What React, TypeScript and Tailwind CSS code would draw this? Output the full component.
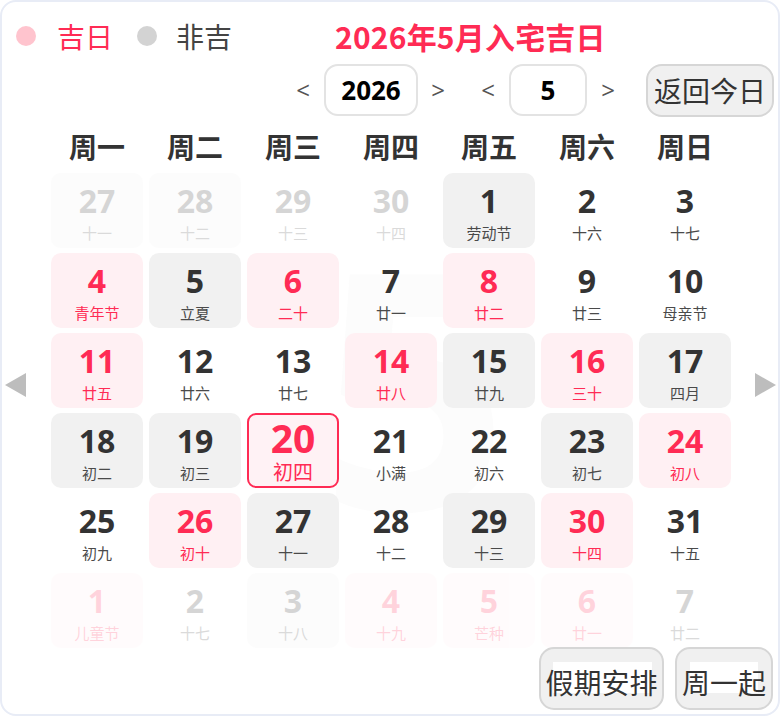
import React from "react"

type Kind = "pink" | "gray" | "plain"

type Day = {
  d: number
  l: string
  k: Kind
  faded?: boolean
  today?: boolean
}

const FONT = { fontFamily: '"Open Sans", "Noto Sans CJK SC", sans-serif' }
const CJK = { fontFamily: '"Noto Sans CJK SC", "Noto Sans", sans-serif' }

const weekdays = ["周一", "周二", "周三", "周四", "周五", "周六", "周日"]

const days: Day[] = [
  { d: 27, l: "十一", k: "gray", faded: true },
  { d: 28, l: "十二", k: "gray", faded: true },
  { d: 29, l: "十三", k: "plain", faded: true },
  { d: 30, l: "十四", k: "plain", faded: true },
  { d: 1, l: "劳动节", k: "gray" },
  { d: 2, l: "十六", k: "plain" },
  { d: 3, l: "十七", k: "plain" },

  { d: 4, l: "青年节", k: "pink" },
  { d: 5, l: "立夏", k: "gray" },
  { d: 6, l: "二十", k: "pink" },
  { d: 7, l: "廿一", k: "plain" },
  { d: 8, l: "廿二", k: "pink" },
  { d: 9, l: "廿三", k: "plain" },
  { d: 10, l: "母亲节", k: "plain" },

  { d: 11, l: "廿五", k: "pink" },
  { d: 12, l: "廿六", k: "plain" },
  { d: 13, l: "廿七", k: "plain" },
  { d: 14, l: "廿八", k: "pink" },
  { d: 15, l: "廿九", k: "gray" },
  { d: 16, l: "三十", k: "pink" },
  { d: 17, l: "四月", k: "gray" },

  { d: 18, l: "初二", k: "gray" },
  { d: 19, l: "初三", k: "gray" },
  { d: 20, l: "初四", k: "pink", today: true },
  { d: 21, l: "小满", k: "plain" },
  { d: 22, l: "初六", k: "plain" },
  { d: 23, l: "初七", k: "gray" },
  { d: 24, l: "初八", k: "pink" },

  { d: 25, l: "初九", k: "plain" },
  { d: 26, l: "初十", k: "pink" },
  { d: 27, l: "十一", k: "gray" },
  { d: 28, l: "十二", k: "plain" },
  { d: 29, l: "十三", k: "gray" },
  { d: 30, l: "十四", k: "pink" },
  { d: 31, l: "十五", k: "plain" },

  { d: 1, l: "儿童节", k: "pink", faded: true },
  { d: 2, l: "十七", k: "plain", faded: true },
  { d: 3, l: "十八", k: "gray", faded: true },
  { d: 4, l: "十九", k: "pink", faded: true },
  { d: 5, l: "芒种", k: "pink", faded: true },
  { d: 6, l: "廿一", k: "pink", faded: true },
  { d: 7, l: "廿二", k: "plain", faded: true },
]

function Cell({ day }: { day: Day }) {
  const bg =
    day.k === "pink" ? "bg-[#fff0f3]" : day.k === "gray" ? "bg-[#f1f1f1]" : ""
  const numColor = day.k === "pink" ? "text-[#ff2b54]" : "text-[#333333]"
  const lunarColor = day.k === "pink" ? "text-[#ff2b54]" : "text-[#4a4a4a]"

  if (day.today) {
    return (
      <div className="relative h-[75px] rounded-[9px] border-2 border-[#ff2b54] bg-[#fff2f5] flex flex-col items-center pt-[3px]">
        <span className="text-[39px] leading-[40px] font-bold text-[#ff2b54]" style={FONT}>
          {day.d}
        </span>
        <span className="mt-[2px] text-[20px] leading-[24px] text-[#ff2b54]" style={CJK}>
          {day.l}
        </span>
      </div>
    )
  }

  return (
    <div
      className={`relative h-[75px] rounded-[10px] ${bg} flex flex-col items-center pt-[10px] ${
        day.faded ? "opacity-[0.2]" : ""
      }`}
    >
      <span className={`text-[32px] leading-[36px] font-bold ${numColor}`} style={FONT}>
        {day.d}
      </span>
      <span className={`mt-[4px] text-[15px] leading-[20px] ${lunarColor}`} style={CJK}>
        {day.l}
      </span>
    </div>
  )
}

export default function App() {
  return (
    <div
      className="relative w-[780px] h-[716px] overflow-hidden rounded-[16px] border-2 border-[#e8ecf6] bg-white text-[#333333]"
      style={CJK}
    >
      {/* faint month watermark */}
      <div
        aria-hidden
        className="pointer-events-none select-none absolute left-[318px] top-[190px] text-[330px] leading-[380px] font-bold text-[#fcfcfc]"
        style={FONT}
      >
        5
      </div>

      <div className="relative">
        {/* legend + title */}
        <div className="mt-[14px] h-[40px] flex items-center pl-[14px]">
          <span className="w-[20px] h-[20px] rounded-full bg-[#ffc4ce]" />
          <span className="ml-[21px] text-[28px] leading-[40px] text-[#ff2b54]">吉日</span>
          <span className="ml-[24px] w-[20px] h-[20px] rounded-full bg-[#d3d3d3]" />
          <span className="ml-[19px] text-[28px] leading-[40px] text-[#444444]">非吉</span>
          <span className="ml-[103px] text-[30px] leading-[40px] font-bold text-[#ff2b54] tracking-[0.2px]">
            2026年5月入宅吉日
          </span>
        </div>

        {/* year / month selectors */}
        <div className="mt-[7px] h-[54px] flex items-center justify-end pr-[4px]">
          <span className="w-[28px] text-center text-[24px] text-[#555555]" style={FONT}>&lt;</span>
          <div className="ml-[7px] w-[94px] h-[52px] rounded-[14px] border-2 border-[#e3e3e3] flex items-center justify-center text-[26px] font-bold text-black" style={FONT}>
            2026
          </div>
          <span className="ml-[6px] w-[28px] text-center text-[24px] text-[#555555]" style={FONT}>&gt;</span>
          <span className="ml-[22px] w-[28px] text-center text-[24px] text-[#555555]" style={FONT}>&lt;</span>
          <div className="ml-[7px] w-[78px] h-[52px] rounded-[14px] border-2 border-[#e3e3e3] flex items-center justify-center text-[26px] font-bold text-black" style={FONT}>
            5
          </div>
          <span className="ml-[7px] w-[28px] text-center text-[24px] text-[#555555]" style={FONT}>&gt;</span>
          <button className="ml-[24px] w-[128px] h-[53px] rounded-[16px] border-2 border-[#d6d6d6] bg-[#f0f0f0] text-[28px] leading-[34px] text-[#333333]">
            返回今日
          </button>
        </div>

        {/* weekday header */}
        <div className="mt-[9px] ml-[49px] w-[680px] grid grid-cols-7 gap-x-[6px] h-[40px] items-center">
          {weekdays.map((w) => (
            <div key={w} className="text-center text-[28px] leading-[40px] font-bold text-[#333333]">
              {w}
            </div>
          ))}
        </div>

        {/* calendar body with side arrows */}
        <div className="mt-[7px] flex items-start">
          <div className="w-[49px] pl-[3px] pt-[200px] flex">
            <svg width="21" height="24" viewBox="0 0 21 24">
              <polygon points="21,0 21,24 0,12" fill="#bdbdbd" />
            </svg>
          </div>
          <div className="w-[680px] grid grid-cols-7 gap-x-[6px] gap-y-[5px]">
            {days.map((day, i) => (
              <Cell key={i} day={day} />
            ))}
          </div>
          <div className="flex-1 pl-[24px] pt-[200px] flex">
            <svg width="21" height="24" viewBox="0 0 21 24">
              <polygon points="0,0 0,24 21,12" fill="#bdbdbd" />
            </svg>
          </div>
        </div>

        {/* bottom buttons */}
        <div className="mt-[-1px] flex justify-end gap-[11px] pr-[5px]">
          <button className="relative w-[125px] h-[63px] rounded-[15px] border-2 border-[#d6d6d6] bg-[#f0f0f0] text-[28px] text-[#333333]">
            <span className="absolute left-[12px] right-[10px] top-[13px] h-[31px] bg-white" />
            <span className="relative leading-[34px] top-[3px]">假期安排</span>
          </button>
          <button className="relative w-[98px] h-[63px] rounded-[15px] border-2 border-[#d6d6d6] bg-[#f0f0f0] text-[28px] text-[#333333]">
            <span className="absolute left-[13px] right-[13px] top-[13px] h-[31px] bg-white" />
            <span className="relative leading-[34px] top-[3px]">周一起</span>
          </button>
        </div>
      </div>
    </div>
  )
}
